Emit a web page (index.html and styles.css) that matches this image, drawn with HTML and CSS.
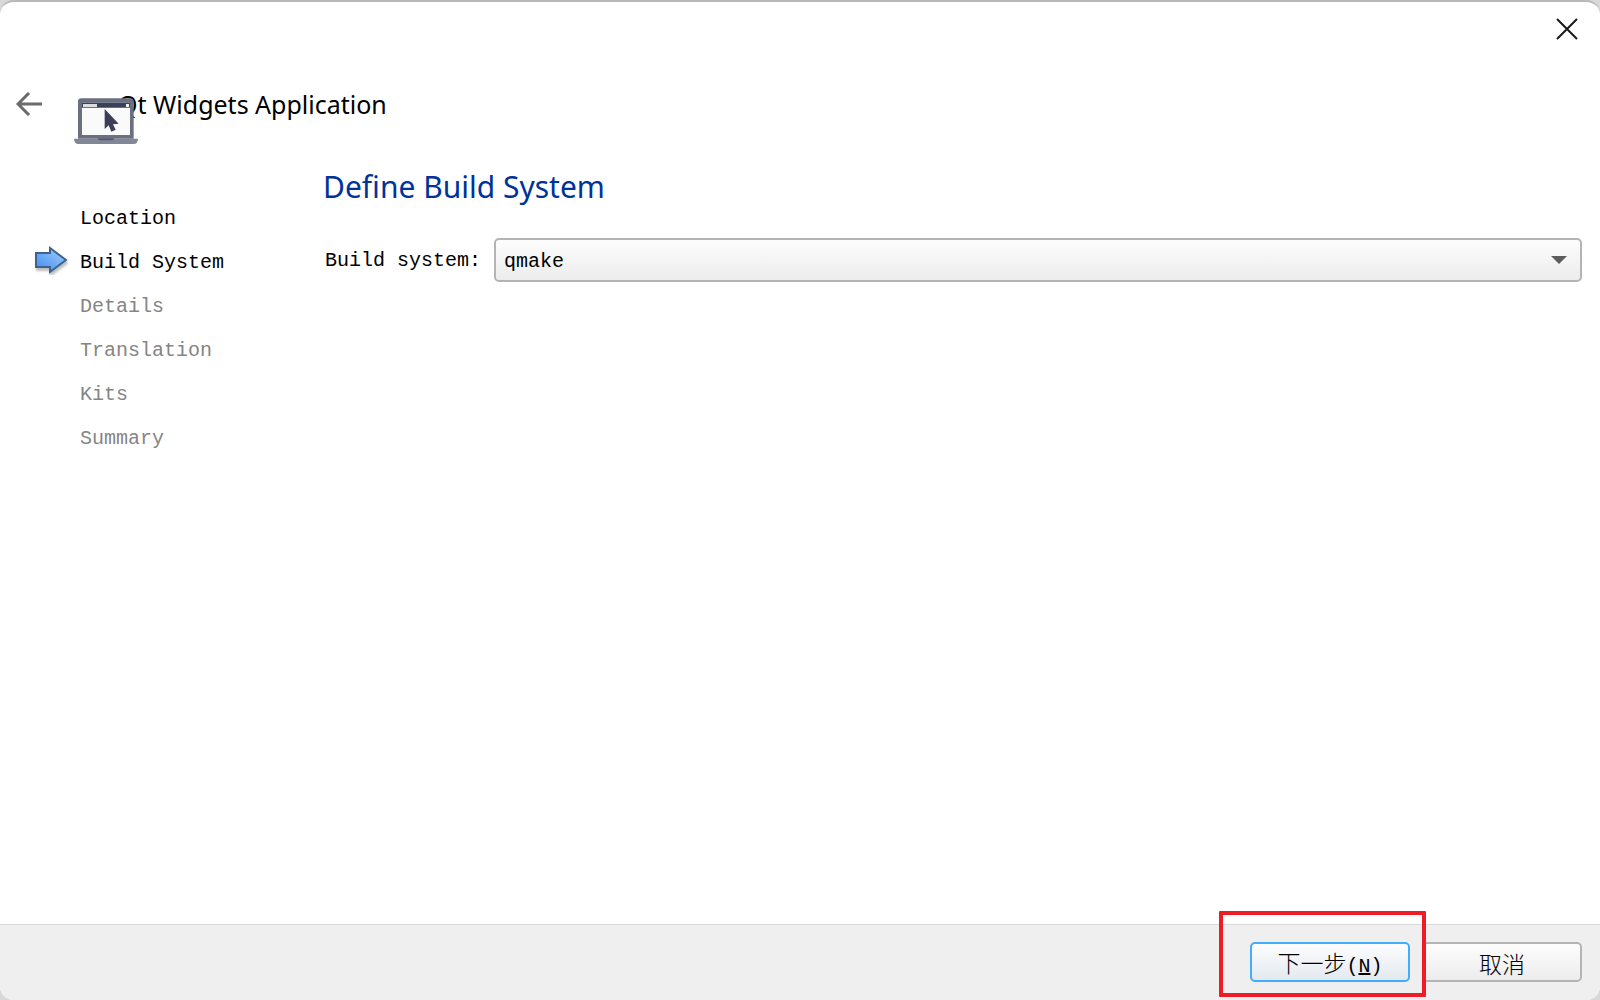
FILE: index.html
```html
<!DOCTYPE html>
<html lang="zh-CN">
<head>
<meta charset="utf-8">
<title>Qt Widgets Application</title>
<link rel="stylesheet" href="styles.css">
</head>
<body>
<div class="dialog">
  <div class="titlebar">
    <button class="icon-button" type="button" aria-label="Close">
      <svg width="22" height="22" viewBox="0 0 22 22"><path d="M1 1L21 21M21 1L1 21" stroke="#191919" stroke-width="2" fill="none"/></svg>
    </button>
  </div>
  <header class="header">
    <button class="icon-button" type="button" aria-label="Back">
      <svg width="26" height="24" viewBox="0 0 26 24"><path d="M13 1L2 12L13 23M2 12H26" stroke="#6b6b6b" stroke-width="3" fill="none"/></svg>
    </button>
    <div class="app-title">
      <svg class="laptop" width="64" height="46" viewBox="42 39 192 138" aria-hidden="true">
        <path d="M54 161V50Q54 40 64 40H211Q221 40 221 50V161Z" fill="#6b7080"/>
        <path d="M66 53H210V150H66Z" fill="#fafafa"/>
        <path d="M66 53H210V68H66Z" fill="#3b4058"/>
        <path d="M69 57H111V66H69Z" fill="#dcdde3"/>
        <path d="M198 57H207V66H198Z" fill="#f4f4f6"/>
        <path d="M42 161H234Q233 177 221 177H55Q43 177 42 161Z" fill="#828796"/>
        <path d="M114 160H162V162Q160 166 155 166H121Q116 166 114 162Z" fill="#555a6e"/>
        <path d="M134 72V132L146 121L154 140L167 134L159 118L176 116Z" fill="#3b4058"/>
      </svg>
      <span>Qt Widgets Application</span>
    </div>
  </header>
  <main class="content">
    <ol class="steps">
      <li class="step">Location</li>
      <li class="step" aria-current="step">
        <svg class="step-arrow" width="34" height="32" viewBox="0 0 34 32" aria-hidden="true">
          <defs>
            <linearGradient id="arrow-fill" x1="0" x2="1" y1="1" y2="0"><stop offset="0" stop-color="#3d8cf0"/><stop offset="1" stop-color="#a5cdfb"/></linearGradient>
            <filter id="arrow-shadow"><feDropShadow dx="1" dy="3" stdDeviation="1" flood-opacity=".25"/></filter>
          </defs>
          <path d="M2 7H16V2L32 14L16 26V21H2Z" fill="url(#arrow-fill)" stroke="#3c648f" stroke-width="2" filter="url(#arrow-shadow)"/>
        </svg>
        Build System
      </li>
      <li class="step pending">Details</li>
      <li class="step pending">Translation</li>
      <li class="step pending">Kits</li>
      <li class="step pending">Summary</li>
    </ol>
    <section class="page">
      <h1 class="page-title">Define Build System</h1>
      <div class="field">
        <label for="build-system">Build system:</label>
        <div class="select-box">
          <select id="build-system"><option>qmake</option></select>
          <svg class="caret" width="16" height="8" viewBox="0 0 16 8" aria-hidden="true"><path d="M0 0H16L8 8Z" fill="#5c5c5c"/></svg>
        </div>
      </div>
    </section>
  </main>
  <footer class="footer">
    <div class="next">
      <button class="button primary" type="button">下一步<span class="access-key">(<u>N</u>)</span></button>
      <span class="highlight"></span>
    </div>
    <button class="button" type="button">取消</button>
  </footer>
</div>
</body>
</html>
```
FILE: styles.css
```css
* { box-sizing: border-box; }
body {
  margin: 0;
  background: #d8d8d8;
  color: #000;
  font: 20px/24px "Liberation Mono", "Noto Sans CJK SC", monospace;
}
.dialog {
  display: flex;
  flex-direction: column;
  min-height: 100vh;
  overflow: hidden;
  background: #fff;
  border-top: 2px solid #b8b8b8;
  border-radius: 14px;
}
.icon-button {
  display: flex;
  padding: 0;
  border: 0;
  background: none;
}
.titlebar {
  display: flex;
  justify-content: flex-end;
  height: 72px;
  padding: 16px 22px;
}
.header {
  display: flex;
  align-items: center;
  gap: 76px;
  height: 60px;
  padding-left: 16px;
}
.app-title {
  position: relative;
  font: 25px/32px "Noto Sans", sans-serif;
}
.laptop {
  position: absolute;
  left: -44px;
  top: 10px;
}
.content {
  display: flex;
  flex: 1;
  padding: 31px 18px 0 80px;
}
.steps {
  flex: 0 0 243px;
  margin: 0;
  padding: 32px 0 0;
  list-style: none;
}
.step {
  position: relative;
  line-height: 44px;
}
.step-arrow {
  position: absolute;
  left: -46px;
  top: 5px;
}
.pending { color: #858585; }
.page { flex: 1; }
.page-title {
  margin: 0;
  color: #003399;
  font: 30px/44px "Noto Sans", sans-serif;
}
.field {
  display: flex;
  align-items: center;
  gap: 13px;
  padding: 29px 0 0 2px;
}
.field label { padding-top: 2px; }
.select-box {
  position: relative;
  flex: 1;
}
.select-box select {
  display: block;
  width: 100%;
  height: 44px;
  padding: 3px 8px 0;
  appearance: none;
  border: 2px solid #b4b4b4;
  border-radius: 5px;
  background: linear-gradient(#fdfdfd, #ececec);
  color: inherit;
  font: inherit;
}
.caret {
  position: absolute;
  right: 15px;
  top: 18px;
  pointer-events: none;
}
.footer {
  display: flex;
  justify-content: flex-end;
  gap: 12px;
  padding: 17px 18px 18px;
  border-top: 1px solid #dadada;
  background: #efefef;
}
.next { position: relative; }
.button {
  display: block;
  width: 160px;
  height: 40px;
  padding: 2px 0 0;
  border: 2px solid #b4b4b4;
  border-radius: 5px;
  background: linear-gradient(#fdfdfd, #ececec);
  color: #000;
  font: 23px/32px "Noto Sans CJK SC", sans-serif;
  font-weight: 300;
}
.access-key {
  font-family: "Liberation Mono", monospace;
  font-size: 20px;
}
.primary {
  border-color: #42adfc;
  background: linear-gradient(#fdfdfe, #e3e9ef);
}
.highlight {
  position: absolute;
  inset: -31px -16px -15px -31px;
  border: 4px solid #ee1c25;
  border-radius: 1px;
  pointer-events: none;
}
```
